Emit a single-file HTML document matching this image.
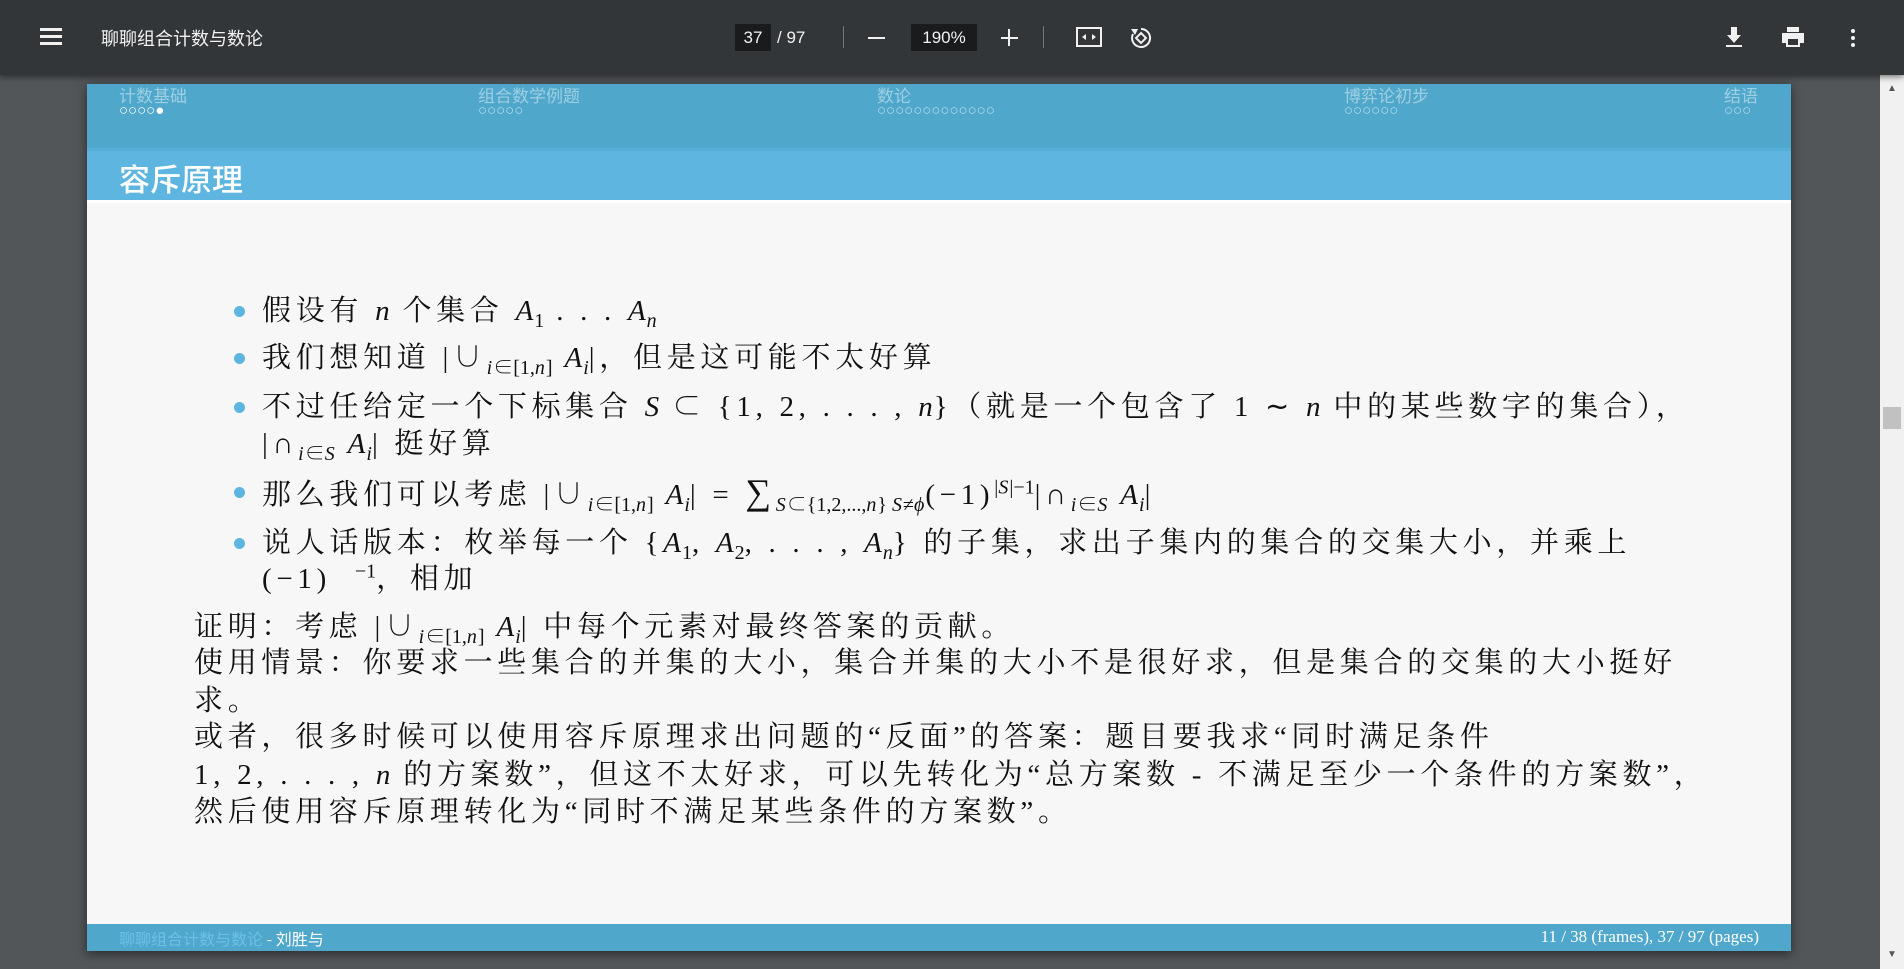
<!DOCTYPE html>
<html><head><meta charset="utf-8"><style>
*{margin:0;padding:0;box-sizing:border-box}
body{width:1904px;height:969px;background:#525659;position:relative;overflow:hidden;font-family:"Liberation Sans","Noto Sans CJK SC",sans-serif}
.tb{position:absolute;left:0;top:0;width:1904px;height:75px;background:#323639;box-shadow:0 2px 6px rgba(0,0,0,.5);color:#f1f1f1;z-index:2}
.a{position:absolute}
.slide{position:absolute;left:87px;top:84px;width:1704px;height:867px;background:#f7f7f7;box-shadow:0 3px 10px rgba(0,0,0,.5)}
.nav{position:absolute;left:0;top:0;width:1704px;height:64px;background:#4fa7cb}
.ttl{position:absolute;left:0;top:64px;width:1704px;height:55px;background:#5db5e0;border-top:3px solid #55aed6;border-bottom:3px solid #fff}
.navt{position:absolute;top:-2px;font-size:17px;color:rgba(255,255,255,.45);font-family:"Noto Sans CJK SC",sans-serif}
.dots{position:absolute;top:18px;font-size:15px;letter-spacing:0px;color:rgba(255,255,255,.6)}
.ft{position:absolute;left:0;bottom:0;width:1704px;height:27px;background:#4fa7cb;font-size:16px;color:#fff}
.c{position:absolute;font-family:"Liberation Serif","Noto Serif CJK SC",serif;font-size:29px;letter-spacing:4.7px;color:#111;white-space:nowrap;line-height:36px}
.c i{font-family:"Liberation Serif",serif;letter-spacing:1px}
.b{position:absolute;left:147px;width:11px;height:11px;border-radius:50%;background:#5db5e0}
sub,sup{font-size:20px;line-height:0;letter-spacing:0}
.sb{position:absolute;left:1880px;top:75px;width:24px;height:894px;background:#f1f1f1}
</style></head><body>
<div class="tb">
 <div class="a" style="left:40px;top:28px;width:22px;height:3px;background:#f1f1f1;box-shadow:0 7px 0 #f1f1f1,0 14px 0 #f1f1f1"></div>
 <div class="a" style="left:101px;top:25px;font-size:18px;font-family:'Noto Sans CJK SC',sans-serif">聊聊组合计数与数论</div>
 <div class="a" style="left:735px;top:24px;width:36px;height:27px;background:#191b1c;font-size:17px;text-align:center;line-height:27px">37</div>
 <div class="a" style="left:777px;top:24px;font-size:17px;line-height:27px">/ 97</div>
 <div class="a" style="left:843px;top:26px;width:1px;height:22px;background:#777"></div>
 <div class="a" style="left:868px;top:37px;width:17px;height:2px;background:#f1f1f1"></div>
 <div class="a" style="left:911px;top:24px;width:66px;height:27px;background:#191b1c;font-size:17px;text-align:center;line-height:27px">190%</div>
 <div class="a" style="left:1001px;top:37px;width:17px;height:2px;background:#f1f1f1"></div>
 <div class="a" style="left:1008px;top:29px;width:2px;height:17px;background:#f1f1f1"></div>
 <div class="a" style="left:1043px;top:26px;width:1px;height:22px;background:#777"></div>
 <svg class="a" style="left:1075px;top:26px" width="28" height="22" viewBox="0 0 28 22"><rect x="2" y="2" width="24" height="18" fill="none" stroke="#f1f1f1" stroke-width="2"/><path d="M7 11l4-3v6zM21 11l-4-3v6z" fill="#f1f1f1"/></svg>
 <svg class="a" style="left:1128px;top:25px" width="26" height="26" viewBox="0 0 26 26"><path d="M13 4a9 9 0 1 1-8 5" fill="none" stroke="#f1f1f1" stroke-width="2"/><path d="M13 8l5 5-5 5-5-5z" fill="none" stroke="#f1f1f1" stroke-width="2"/><path d="M3 4l4 6 3-6z" fill="#f1f1f1"/></svg>
 <svg class="a" style="left:1724px;top:26px" width="20" height="22" viewBox="0 0 20 22"><path d="M7 1h6v8h4l-7 8-7-8h4z M2 19h16v2H2z" fill="#f1f1f1"/></svg>
 <svg class="a" style="left:1781px;top:27px" width="24" height="20" viewBox="0 0 24 20"><path d="M6 0h12v5H6z M1 6h22v10h-4v4H5v-4H1z" fill="#f1f1f1"/><rect x="7" y="12" width="10" height="6" fill="#323639"/></svg>
 <div class="a" style="left:1851px;top:29px;width:4px;height:4px;border-radius:2px;background:#f1f1f1;box-shadow:0 7px 0 #f1f1f1,0 14px 0 #f1f1f1"></div>
</div>
<div class="sb"><div class="a" style="left:3px;top:332px;width:18px;height:22px;background:#c1c1c1"></div><div class="a" style="left:7px;top:8px;font-size:10px;color:#555">▲</div><div class="a" style="left:7px;top:874px;font-size:10px;color:#555">▼</div></div>
<div class="slide">
 <div class="nav">
  <div class="navt" style="left:32px">计数基础</div><div class="dots" style="left:32px;color:#fff">○○○○●</div>
  <div class="navt" style="left:391px">组合数学例题</div><div class="dots" style="left:391px">○○○○○</div>
  <div class="navt" style="left:790px">数论</div><div class="dots" style="left:790px">○○○○○○○○○○○○○</div>
  <div class="navt" style="left:1257px">博弈论初步</div><div class="dots" style="left:1257px">○○○○○○</div>
  <div class="navt" style="left:1637px">结语</div><div class="dots" style="left:1637px">○○○</div>
 </div>
 <div class="ttl"><div class="a" style="left:32px;top:4px;font-size:31px;color:#fff;font-family:'Noto Sans CJK SC',sans-serif;font-weight:500">容斥原理</div></div>
 <div class="b" style="top:222px"></div>
 <div class="c" style="left:175px;top:209px">假设有 <i>n</i> 个集合 <i>A</i><sub>1</sub> . . . <i>A<sub>n</sub></i></div>
 <div class="b" style="top:269px"></div>
 <div class="c" style="left:175px;top:256px">我们想知道 |∪<sub><i>i</i>∈[1,<i>n</i>]</sub> <i>A<sub>i</sub></i>|，但是这可能不太好算</div>
 <div class="b" style="top:318px"></div>
 <div class="c" style="left:175px;top:305px">不过任给定一个下标集合 <i>S</i> ⊂ {1, 2, . . . , <i>n</i>}（就是一个包含了 1 ∼ <i>n</i> 中的某些数字的集合），</div>
 <div class="c" style="left:175px;top:342px">|∩<sub><i>i</i>∈<i>S</i></sub> <i>A<sub>i</sub></i>| 挺好算</div>
 <div class="b" style="top:403px"></div>
 <div class="c" style="left:175px;top:390px">那么我们可以考虑 |∪<sub><i>i</i>∈[1,<i>n</i>]</sub> <i>A<sub>i</sub></i>| = <span style="font-size:36px">∑</span><sub><i>S</i>⊂{1,2,...,<i>n</i>} <i>S</i>≠<i>ϕ</i></sub>(−1)<sup>|<i>S</i>|−1</sup>|∩<sub><i>i</i>∈<i>S</i></sub> <i>A<sub>i</sub></i>|</div>
 <div class="b" style="top:454px"></div>
 <div class="c" style="left:175px;top:441px">说人话版本：枚举每一个 {<i>A</i><sub>1</sub>, <i>A</i><sub>2</sub>, . . . , <i>A<sub>n</sub></i>} 的子集，求出子集内的集合的交集大小，并乘上</div>
 <div class="c" style="left:175px;top:477px">(−1) &nbsp;<sup>−1</sup>，相加</div>
 <div class="c" style="left:107px;top:525px">证明：考虑 |∪<sub><i>i</i>∈[1,<i>n</i>]</sub> <i>A<sub>i</sub></i>| 中每个元素对最终答案的贡献。</div>
 <div class="c" style="left:107px;top:561px">使用情景：你要求一些集合的并集的大小，集合并集的大小不是很好求，但是集合的交集的大小挺好</div>
 <div class="c" style="left:107px;top:599px">求。</div>
 <div class="c" style="left:107px;top:635px">或者，很多时候可以使用容斥原理求出问题的“反面”的答案：题目要我求“同时满足条件</div>
 <div class="c" style="left:107px;top:673px">1, 2, . . . , <i>n</i> 的方案数”，但这不太好求，可以先转化为“总方案数 - 不满足至少一个条件的方案数”，</div>
 <div class="c" style="left:107px;top:710px">然后使用容斥原理转化为“同时不满足某些条件的方案数”。</div>
 <div class="ft"><span class="a" style="left:32px;top:2px;font-family:'Noto Sans CJK SC',sans-serif"><span style="color:#6cc0e8">聊聊组合计数与数论</span> - 刘胜与</span><span class="a" style="right:32px;top:3px;font-family:'Liberation Serif',serif;font-size:17px">11 / 38 (frames), 37 / 97 (pages)</span></div>
</div>
</body></html>
